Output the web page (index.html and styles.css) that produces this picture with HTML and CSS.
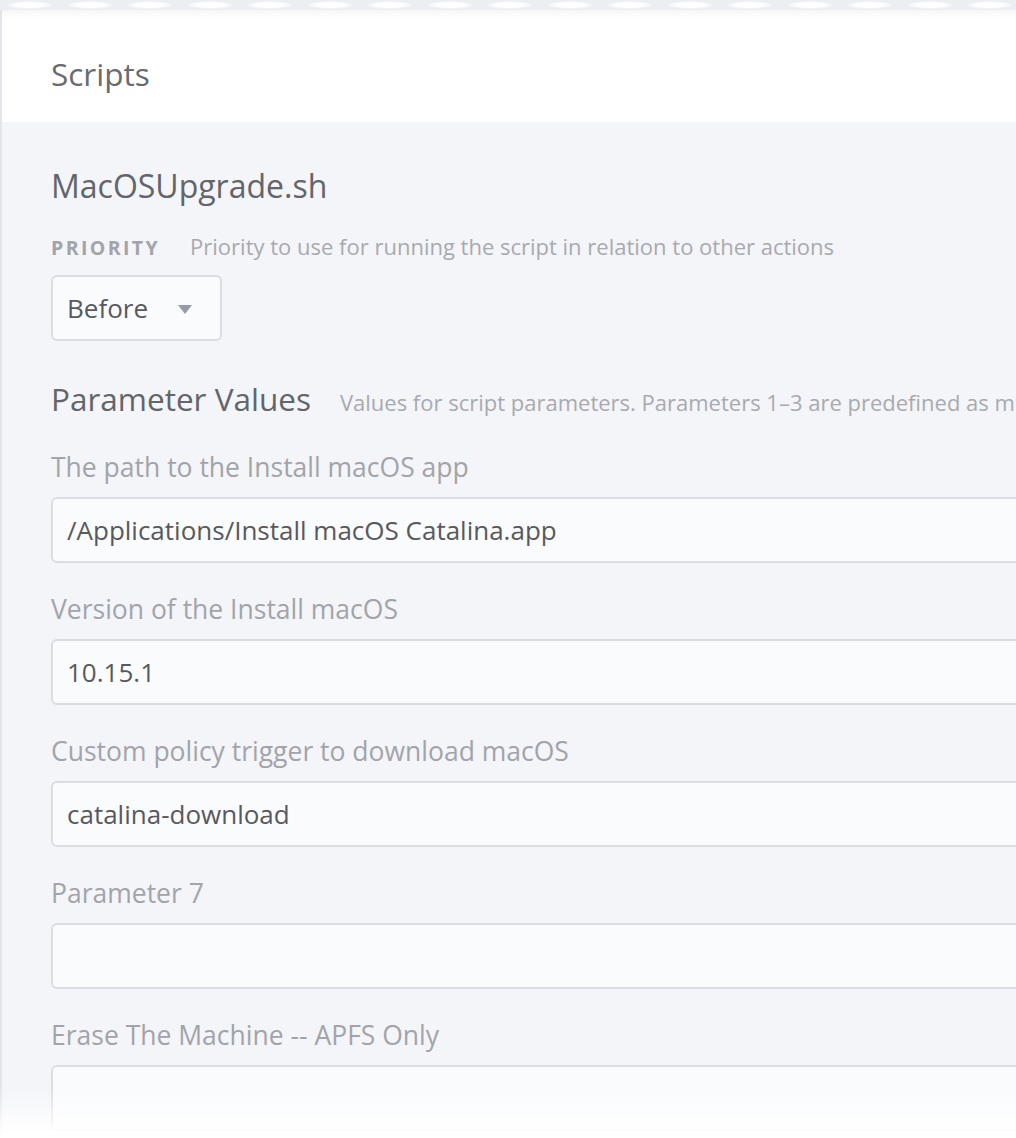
FILE: index.html
```html
<!DOCTYPE html>
<html lang="en">
<head>
  <meta charset="UTF-8">
  <title>Scripts</title>
  <link rel="stylesheet" href="styles.css">
</head>
<body>
  <div class="topstrip"></div>
  <div class="page">
    <div class="header">
      <h1>Scripts</h1>
    </div>

    <div class="content">
      <h2 class="script-name">MacOSUpgrade.sh</h2>

      <div class="priority-row">
        <span class="caps">Priority</span>
        <span class="hint">Priority to use for running the script in relation to other actions</span>
      </div>
      <div class="select">
        <span>Before</span>
        <span class="caret"></span>
      </div>

      <div class="section-head">
        <h3>Parameter Values</h3>
        <span class="hint">Values for script parameters. Parameters 1–3 are predefined as mount point, computer name, and username</span>
      </div>

      <div class="field">
        <label>The path to the Install macOS app</label>
        <div class="input">/Applications/Install macOS Catalina.app</div>
      </div>
      <div class="field">
        <label>Version of the Install macOS</label>
        <div class="input">10.15.1</div>
      </div>
      <div class="field">
        <label>Custom policy trigger to download macOS</label>
        <div class="input">catalina-download</div>
      </div>
      <div class="field">
        <label>Parameter 7</label>
        <div class="input"></div>
      </div>
      <div class="field">
        <label>Erase The Machine -- APFS Only</label>
        <div class="input"></div>
      </div>
    </div>
  </div>
  <div class="fade"></div>
</body>
</html>
```

FILE: styles.css
```css
:root {
  --bg: #f4f5f9;
  --field-bg: #fafbfd;
  --border: #dcdde3;
  --title: #636569;
  --text: #58595e;
  --muted: #a2a4a9;
  --radius: 6px;
}
* { box-sizing: border-box; margin: 0; padding: 0; }
html, body { height: 100%; }
body {
  font-family: "Open Sans", Lato, sans-serif;
  background: var(--bg);
  overflow: hidden;
  width: 1016px;
}
.topstrip {
  height: 10px;
  background:
    radial-gradient(ellipse 24px 4px at 50% 50%, #ffffff 60%, transparent 100%) 0 1px / 60px 8px repeat-x,
    #eceef2;
}
.page {
  width: 1400px;
  border-left: 2px solid #e4e5ea;
  background: var(--bg);
  min-height: 1128px;
}
.header {
  height: 112px;
  background: #fff;
  padding-left: 49px;
  display: flex; align-items: center;
  box-shadow: inset 0 10px 10px -8px rgba(0,0,0,0.06);
}
.header h1 {
  font-size: 31.5px; font-weight: 400;
  color: #696b70;
  padding-top: 14px;
}
.content { padding: 44px 0 0 49px; }
.script-name {
  font-size: 32px; font-weight: 400; line-height: 40px;
  color: var(--title);
}
.priority-row {
  margin-top: 28px; line-height: 24px;
  display: flex; align-items: baseline; gap: 30px;
}
.caps {
  font-size: 19.5px; font-weight: 700; letter-spacing: 2.4px;
  text-transform: uppercase; color: var(--muted);
}
.hint { font-size: 22px; color: #a8aaaf; white-space: nowrap; }
.select {
  margin-top: 15px;
  width: 171px; height: 66px;
  border: 2px solid var(--border); border-radius: var(--radius);
  background: var(--field-bg);
  display: flex; align-items: center; gap: 30px;
  padding-left: 14px;
  font-size: 26px; color: var(--text);
}
.caret {
  width: 0; height: 0;
  border-left: 7.5px solid transparent;
  border-right: 7.5px solid transparent;
  border-top: 9px solid #979ba7;
  margin-top: 2px;
}
.section-head {
  margin-top: 38px; line-height: 40px;
  display: flex; align-items: baseline; gap: 29px;
}
.section-head h3 {
  font-size: 31.5px; font-weight: 400; color: var(--title);
  white-space: nowrap; flex-shrink: 0;
}
.field { margin-top: 31px; }
.section-head + .field { margin-top: 30px; }
.field label {
  display: block; line-height: 30px;
  font-size: 26.5px; color: var(--muted);
}
.input {
  margin-top: 15px;
  height: 66px;
  border: 2px solid var(--border); border-radius: var(--radius);
  background: var(--field-bg);
  padding-left: 14px;
  display: flex; align-items: center;
  font-size: 26px; color: var(--text);
}
.fade {
  position: fixed; left: 0; right: 0; bottom: 0;
  height: 52px;
  background: linear-gradient(to bottom, rgba(255,255,255,0), #ffffff 95%);
  pointer-events: none;
}
```
